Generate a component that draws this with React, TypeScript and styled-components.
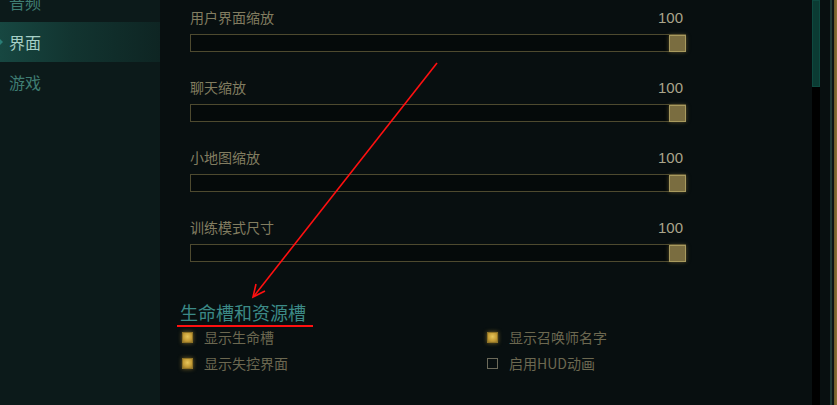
import React from "react";
import styled, { createGlobalStyle } from "styled-components";

const FONT = `"Microsoft YaHei", "Noto Sans CJK SC", "Noto Sans", sans-serif`;

const GlobalStyle = createGlobalStyle`
  html, body {
    margin: 0;
    padding: 0;
    background: #080f10;
    overflow: hidden;
  }
  #root {
    width: 837px;
    height: 405px;
  }
`;

const NAV = [
  { id: "audio", label: "音频" },
  { id: "ui", label: "界面", active: true },
  { id: "game", label: "游戏" },
];

const SLIDERS = [
  { label: "用户界面缩放", value: 100 },
  { label: "聊天缩放", value: 100 },
  { label: "小地图缩放", value: 100 },
  { label: "训练模式尺寸", value: 100 },
];

const CHECKS = [
  { label: "显示生命槽", checked: true },
  { label: "显示召唤师名字", checked: true },
  { label: "显示失控界面", checked: true },
  { label: "启用HUD动画", checked: false },
];

const App = () => {
  return (
    <Page>
      <GlobalStyle />
      <Sidebar>
        <NavList>
          {NAV.map((n) => (
            <NavItem key={n.id} $active={!!n.active}>
              {n.active && <NavMarker />}
              {n.label}
            </NavItem>
          ))}
        </NavList>
      </Sidebar>
      <Content>
        {SLIDERS.map((s) => (
          <SliderGroup key={s.label}>
            <SliderHead>
              <SliderLabel>{s.label}</SliderLabel>
              <SliderValue>{s.value}</SliderValue>
            </SliderHead>
            <Track>
              <Thumb />
            </Track>
          </SliderGroup>
        ))}
        <SectionTitle>生命槽和资源槽</SectionTitle>
        <CheckGrid>
          {CHECKS.map((c) => (
            <CheckRow key={c.label}>
              <Box $checked={c.checked} />
              <CheckLabel>{c.label}</CheckLabel>
            </CheckRow>
          ))}
        </CheckGrid>
      </Content>
      <ScrollBar>
        <ScrollThumb />
      </ScrollBar>
      <Frame>
        <FrameLine />
        <FrameGap />
        <FrameGold />
      </Frame>
      <Annotation width="837" height="405" viewBox="0 0 837 405">
        <line x1="437" y1="63" x2="254" y2="296" stroke="#ff1010" strokeWidth="1.6" />
        <polyline
          points="256,284 253,297 265,291"
          fill="none"
          stroke="#ff1010"
          strokeWidth="1.6"
          strokeLinejoin="miter"
        />
        <line x1="177" y1="326" x2="313" y2="326" stroke="#ff1010" strokeWidth="2" />
      </Annotation>
    </Page>
  );
};

const Page = styled.div`
  position: relative;
  display: flex;
  width: 837px;
  height: 405px;
  background: #080f10;
  font-family: ${FONT};
  overflow: hidden;
`;

const Sidebar = styled.aside`
  width: 160px;
  flex-shrink: 0;
  background: #0c1a1a;
`;

const NavList = styled.div`
  margin-top: -18px;
  display: flex;
  flex-direction: column;
`;

const NavItem = styled.div<{ $active: boolean }>`
  position: relative;
  height: 40px;
  display: flex;
  align-items: center;
  padding-left: 9px;
  font-size: 16px;
  color: ${(p) => (p.$active ? "#a6cfc6" : "#3f7d73")};
  background: ${(p) =>
    p.$active
      ? "linear-gradient(90deg, #174741 0%, #123430 45%, #0e2523 100%)"
      : "transparent"};
`;

const NavMarker = styled.span`
  position: absolute;
  left: 0;
  top: 17px;
  width: 0;
  height: 0;
  border-top: 3px solid transparent;
  border-bottom: 3px solid transparent;
  border-left: 3px solid #2a7d76;
`;

const Content = styled.main`
  flex: 1;
  padding: 7px 0 0 30px;
  display: flex;
  flex-direction: column;
`;

const SliderGroup = styled.div`
  width: 496px;
  margin-bottom: 25px;
`;

const SliderHead = styled.div`
  display: flex;
  justify-content: space-between;
  align-items: center;
  height: 20px;
  margin-bottom: 7px;
  padding-right: 3px;
`;

const SliderLabel = styled.span`
  font-size: 14px;
  color: #827d60;
`;

const SliderValue = styled.span`
  font-family: "Liberation Sans", Arial, sans-serif;
  font-size: 15px;
  color: #aaa58b;
`;

const Track = styled.div`
  position: relative;
  height: 18px;
  box-sizing: border-box;
  border: 1px solid #4e4a2f;
  background: #050a0a;
  display: flex;
  justify-content: flex-end;
  align-items: center;
`;

const Thumb = styled.div`
  width: 17px;
  height: 17px;
  margin-right: -1px;
  box-sizing: border-box;
  border: 1px solid #a89a5e;
  background: #7a6d40;
  box-shadow: 0 0 4px rgba(170, 145, 70, 0.5);
`;

const SectionTitle = styled.div`
  margin: 13px 0 0 -10px;
  height: 24px;
  line-height: 24px;
  font-size: 18px;
  color: #3c8a87;
`;

const CheckGrid = styled.div`
  display: grid;
  grid-template-columns: 305px 200px;
  grid-auto-rows: 26px;
  margin: 0 0 0 -8px;
`;

const CheckRow = styled.div`
  display: flex;
  align-items: center;
  gap: 11px;
`;

const Box = styled.span<{ $checked: boolean }>`
  width: 11px;
  height: 11px;
  box-sizing: border-box;
  ${(p) =>
    p.$checked
      ? `
    border: 1px solid #8f7326;
    background: radial-gradient(circle at 50% 40%, #e7c65a 0%, #c49c35 60%, #94752a 100%);
    box-shadow: 0 0 4px rgba(210, 170, 60, 0.55);
  `
      : `
    border: 1px solid #6c6a5a;
    background: transparent;
  `}
`;

const CheckLabel = styled.span`
  font-size: 14px;
  color: #6c6850;
`;

const ScrollBar = styled.div`
  width: 8px;
  flex-shrink: 0;
  background: #000000;
  margin-right: 10px;
`;

const ScrollThumb = styled.div`
  height: 87px;
  background: #0b3b33;
  box-shadow: inset 0 0 0 1px #0e4a40;
`;

const Frame = styled.div`
  display: flex;
  flex-shrink: 0;
  background: #0d1a1a;
`;

const FrameLine = styled.div`
  width: 2px;
  background: #1e3b36;
`;

const FrameGap = styled.div`
  width: 2px;
  background: #0b1515;
`;

const FrameGold = styled.div`
  width: 3px;
  background: linear-gradient(90deg, #6b5a2a, #8a7438);
`;

const Annotation = styled.svg`
  position: absolute;
  left: 0;
  top: 0;
  pointer-events: none;
`;

export default App;
